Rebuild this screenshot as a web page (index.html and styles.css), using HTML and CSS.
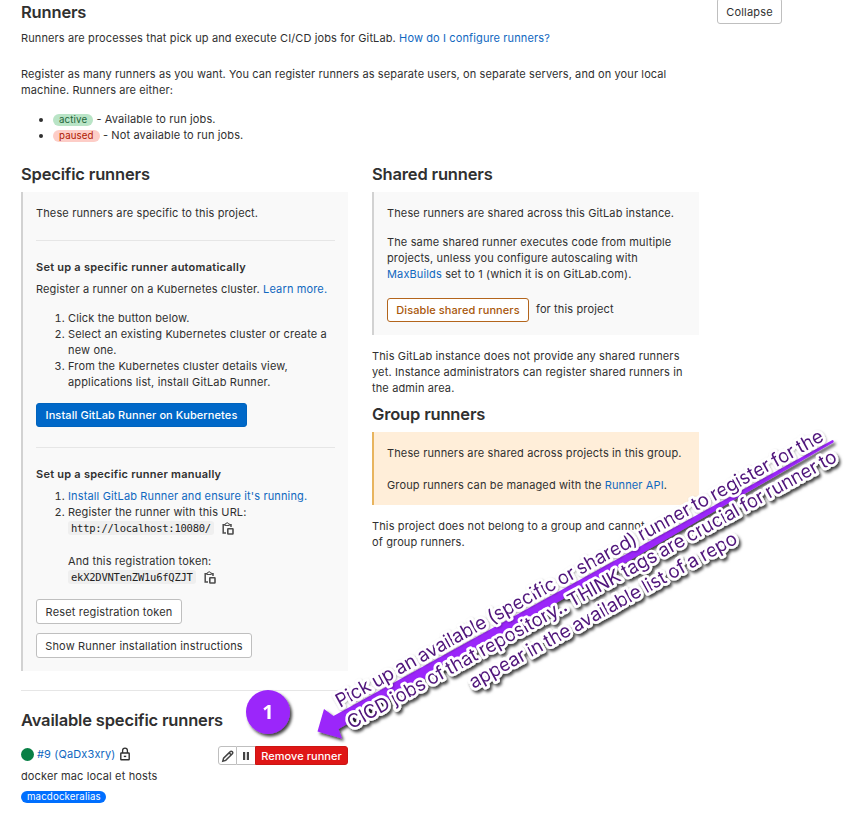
FILE: index.html
```html
<!DOCTYPE html>
<html lang="en">
<head>
<meta charset="utf-8">
<title>Runners</title>
<link rel="stylesheet" href="styles.css">
</head>
<body>
<svg class="defs" width="0" height="0">
  <symbol id="copy" viewBox="0 0 12 13"><path d="M3 2.700H1.200v8.300H4M8 2.700h1V5" fill="none" stroke="currentColor" stroke-width="1.500"/><path d="M3 3.500V1.900h1a1.200 1.200 0 0 1 2.400 0h1v1.600z" fill="none" stroke="currentColor" stroke-width="1"/><rect x="5.800" y="6.800" width="5.200" height="5.200" rx=".4" fill="none" stroke="currentColor" stroke-width="1.600"/></symbol>
</svg>
<main class="page">
  <header class="head">
    <h4>Runners</h4>
    <button class="btn collapse">Collapse</button>
  </header>
  <p class="intro">Runners are processes that pick up and execute CI/CD jobs for GitLab. <a>How do I configure runners?</a></p>
  <p class="about">Register as many runners as you want. You can register runners as separate users, on separate servers, and on your local<br>machine. Runners are either:</p>
  <ul class="states">
    <li><span class="badge active">active</span> - Available to run jobs.</li>
    <li><span class="badge paused">paused</span> - Not available to run jobs.</li>
  </ul>
  <div class="columns">
    <section>
      <h4>Specific runners</h4>
      <div class="panel">
        <p>These runners are specific to this project.</p>
        <hr>
        <h5>Set up a specific runner automatically</h5>
        <p class="kube">Register a runner on a Kubernetes cluster. <a>Learn more.</a></p>
        <ol class="steps">
          <li>Click the button below.</li>
          <li>Select an existing Kubernetes cluster or create a<br>new one.</li>
          <li>From the Kubernetes cluster details view,<br>applications list, install GitLab Runner.</li>
        </ol>
        <button class="btn primary">Install GitLab Runner on Kubernetes</button>
        <hr>
        <h5>Set up a specific runner manually</h5>
        <ol class="manual">
          <li><a>Install GitLab Runner and ensure it's running.</a></li>
          <li>Register the runner with this URL:
            <div class="code-row"><code>http://localhost:10080/</code><svg class="copy"><use href="#copy"/></svg></div>
            <div class="token">And this registration token:</div>
            <div class="code-row"><code>ekX2DVNTenZW1u6fQZJT</code><svg class="copy"><use href="#copy"/></svg></div>
          </li>
        </ol>
        <button class="btn reset">Reset registration token</button>
        <button class="btn show">Show Runner installation instructions</button>
      </div>
      <div class="available">
        <h4>Available specific runners</h4>
        <div class="runner">
          <span class="dot"></span><a>#9 (QaDx3xry)</a>
          <svg class="lock" viewBox="0 0 12 14"><rect x="1.800" y="6" width="8.400" height="6.700" rx=".5" fill="none" stroke="currentColor" stroke-width="1.400"/><path d="M3.600 6V3.500a2.400 2.400 0 0 1 4.800 0V6" fill="none" stroke="currentColor" stroke-width="1.300"/><path d="M4.800 8.700h2.400v1.400H4.800z" fill="currentColor"/></svg>
          <div class="actions">
            <span class="act edit"><svg viewBox="0 0 14 14"><path d="M1.800 12.200l.8-3 6.700-6.600a1.250 1.250 0 0 1 1.800 0l.3.300a1.250 1.250 0 0 1 0 1.800l-6.700 6.700zM8.200 3.900l1.900 1.900" fill="none" stroke="currentColor" stroke-width="1.500"/></svg></span>
            <span class="act pause"><svg viewBox="0 0 14 14"><path d="M4 3h2.200v8H4zM7.800 3H10v8H7.800z" fill="currentColor"/></svg></span>
            <span class="act remove">Remove runner</span>
          </div>
        </div>
        <p>docker mac local et hosts</p>
        <span class="badge tag">macdockeralias</span>
      </div>
    </section>
    <section>
      <h4>Shared runners</h4>
      <div class="panel shared">
        <p>These runners are shared across this GitLab instance.</p>
        <p class="same">The same shared runner executes code from multiple<br>projects, unless you configure autoscaling with<br><a>MaxBuilds</a> set to 1 (which it is on GitLab.com).</p>
        <div class="disable"><button class="btn warning">Disable shared runners</button><span>for this project</span></div>
      </div>
      <p class="note">This GitLab instance does not provide any shared runners<br>yet. Instance administrators can register shared runners in<br>the admin area.</p>
      <h4 class="group">Group runners</h4>
      <div class="panel orange">
        <p>These runners are shared across projects in this group.</p>
        <p class="api">Group runners can be managed with the <a>Runner API</a>.</p>
      </div>
      <p class="note">This project does not belong to a group and cannot<br>of group runners.</p>
    </section>
  </div>
</main>
<svg class="annotation" viewBox="0 0 857 814">
  <defs>
    <filter id="shadow" x="-10%" y="-10%" width="125%" height="125%"><feDropShadow dx="2" dy="2.500" stdDeviation="1.600" flood-color="#000" flood-opacity=".75"/></filter>
    <filter id="soft" x="-10%" y="-10%" width="125%" height="125%"><feDropShadow dx="1" dy="1" stdDeviation="1.300" flood-color="#000" flood-opacity=".3"/></filter>
  </defs>
  <g filter="url(#shadow)">
    <path d="M317.500 731.500l6.500-22.500 9.500 7L832.500 440q2 .5.800 2.500L338.500 729l3.500 9.500z" fill="#9b25fa"/>
  </g>
  <g filter="url(#shadow)">
    <circle cx="268" cy="712" r="22" fill="#9b25fa"/>
    <text class="step" x="268" y="718.500" text-anchor="middle">1</text>
  </g>
  <g class="callout" filter="url(#soft)">
    <text transform="translate(340 708) rotate(-28.900)" textLength="554" lengthAdjust="spacing">Pick up an available (specific or shared) runner to register for the</text>
  </g>
  <g class="callout" filter="url(#shadow)">
    <text transform="translate(351.500 729.500) rotate(-28.900)" textLength="556" lengthAdjust="spacing">CICD jobs of that repository.. THINK tags are crucial for runner to</text>
    <text transform="translate(473.500 689) rotate(-28.900)" textLength="303" lengthAdjust="spacing">appear in the available list of a repo</text>
  </g>
</svg>
</body>
</html>
```

FILE: styles.css
```css
* { box-sizing: border-box; }
body {
  margin: 0;
  height: 814px;
  overflow: hidden;
  position: relative;
  background: #fff;
  color: #303030;
  font: 11px/16px Inter, "Liberation Sans", sans-serif;
  letter-spacing: 0.135px;
  white-space: nowrap;
}
.defs { position: absolute; }
p, ul, ol, h4, h5 { margin: 0; }
a { color: #1068bf; }
.page { padding: 2px 0 0 21px; }
h4 { font-size: 16.5px; line-height: 20px; font-weight: 600; letter-spacing: -0.17px; }
h5 { font-size: 11px; line-height: 16px; font-weight: 600; letter-spacing: 0.24px; }
.head { display: flex; justify-content: space-between; width: 761px; height: 28px; }
.btn {
  display: block;
  height: 25px;
  padding: 0 8px;
  border: 1px solid #bfbfbf;
  border-radius: 3px;
  background: #fff;
  color: #303030;
  font: inherit;
  letter-spacing: 0.16px;
  white-space: nowrap;
}
.collapse { width: 65px; height: 26px; margin-top: -4px; padding-top: 2px; letter-spacing: 0.2px; }
.intro { letter-spacing: 0.12px; }
.about { margin-top: 20px; letter-spacing: 0.105px; }
.states { margin-top: 13px; padding-left: 32px; letter-spacing: 0.13px; }
.badge {
  display: inline-block;
  height: 12px;
  padding: 0 6px;
  border-radius: 6px;
  font-size: 9.7px;
  line-height: 12px;
}
.active { background: #b9e4c6; color: #24663b; }
.paused { background: #fdcdc7; color: #ae1800; }
.columns { display: grid; grid-template-columns: 327px 327px; column-gap: 24px; margin-top: 21px; align-items: start; }
.panel { margin-top: 8px; height: 479px; padding: 13px; border-left: 2px solid #d2d2d2; background: #f9f9f9; }
hr { height: 1px; margin: 19px 0 18px; border: 0; background: #e6e6e6; }
.kube { margin-top: 6px; }
.steps { margin-top: 13px; padding-left: 32px; letter-spacing: 0.15px; }
.manual { margin-top: 6px; padding-left: 32px; letter-spacing: 0.14px; }
.primary { width: 211px; height: 24px; margin-top: 13px; margin-bottom: 20px; border-color: #0063bd; background: #0068c8; color: #fff; font-weight: 500; letter-spacing: 0.1px; }
.code-row { display: flex; align-items: center; height: 16px; }
code {
  height: 14px;
  padding: 0 3px;
  border-radius: 3px;
  background: #efefef;
  color: #222;
  font: 10.5px/14px "DejaVu Sans Mono", monospace;
  letter-spacing: -0.24px;
}
.copy { width: 12px; height: 13px; margin-left: 8px; color: #4d4d4d; }
.token { margin-top: 17px; }
.reset { width: 146px; margin-top: 14px; }
.show { width: 216px; margin-top: 9px; }
.shared { height: 143px; }
.same { margin-top: 13px; }
.disable { display: flex; gap: 7px; margin-top: 16px; line-height: 23px; }
.warning { width: 142px; height: 24px; border-color: #b3651c; color: #a8570b; font-weight: 500; letter-spacing: 0.08px; }
.note { margin-top: 13px; }
.group { margin-top: 8px; }
.orange { height: 73px; border-color: #e8b45e; background: #ffeed9; }
.api { margin-top: 16px; }
.available { margin-top: 19px; padding-top: 19px; border-top: 1px solid #e6e6e6; }
.runner { display: flex; align-items: center; height: 20px; margin: 14px 0 4px; }
.dot { width: 13px; height: 13px; margin-right: 3px; border-radius: 50%; background: #087f45; }
.lock { width: 12px; height: 14px; margin-left: 3px; }
.actions { display: flex; margin-left: auto; height: 19px; margin-top: 3px; }
.act { display: flex; align-items: center; justify-content: center; border: 1px solid #bfbfbf; }
.act svg { width: 14px; height: 14px; flex: none; }
.edit { width: 19px; border-radius: 3px 0 0 3px; color: #444; }
.pause { width: 18px; border-left: 0; border-right: 0; color: #444; }
.remove { width: 93px; border-color: #cb1513; border-radius: 0 3px 3px 0; background: #df1616; color: #fff; font-weight: 500; letter-spacing: 0.05px; }
.tag { display: block; width: 85px; margin-top: 7px; background: #006fff; color: #fff; }
.annotation { position: absolute; top: 0; left: 0; width: 857px; height: 814px; pointer-events: none; }
.step { fill: #fff; font: 700 20px "Open Sans", sans-serif; }
.callout { font: 19px Inter, sans-serif; letter-spacing: 0; word-spacing: -0.8px; fill: #50157b; stroke: #fff; stroke-width: 5.5px; stroke-linejoin: round; paint-order: stroke; }
```
